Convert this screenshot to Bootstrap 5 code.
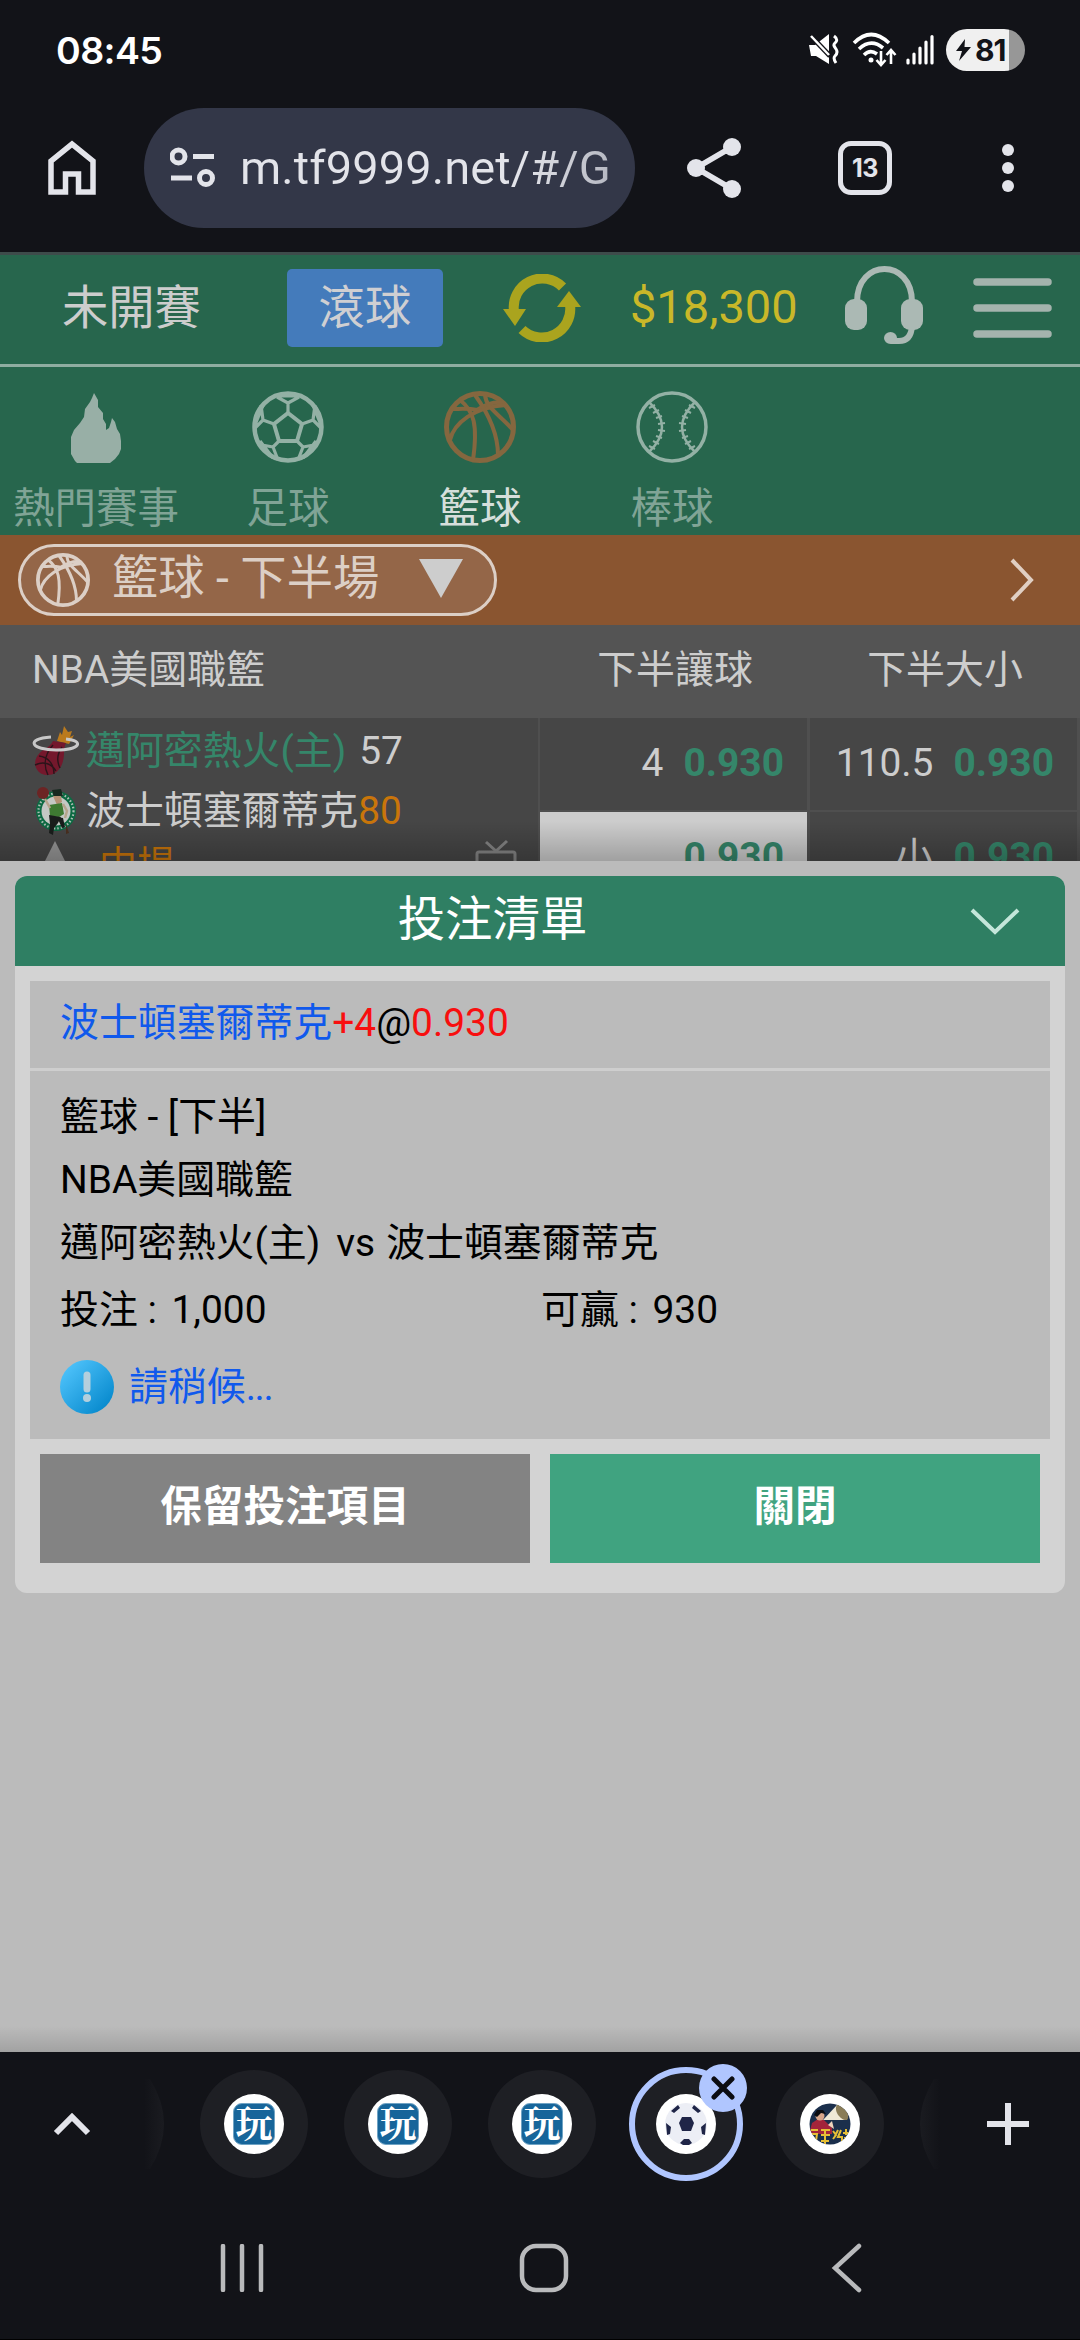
<!DOCTYPE html>
<html lang="zh-Hant">
<head>
<meta charset="utf-8">
<meta name="viewport" content="width=device-width, initial-scale=1">
<title>投注清單</title>
<link href="https://cdn.jsdelivr.net/npm/bootstrap@5.3.0/dist/css/bootstrap.min.css" rel="stylesheet">
<style>
  html, body { height: 100%; }
  body { font-family: Roboto, "Noto Sans CJK TC", sans-serif; background: #121318; color: #cdcdcd; overflow: hidden; }
  svg { display: block; flex: none; }
  .screen { width: 1080px; height: 2340px; overflow: hidden; }
  .screen > * { flex: none; }

  /* system status bar */
  .statusbar { height: 84px; padding: 16px 56px 0 56px; color: #fff; }
  .clock { font: 600 37.5px/50px Inter, sans-serif; letter-spacing: -.6px; padding-top: 1px; }
  .wifi { margin-left: 12px; }
  .battery { width: 79px; height: 42px; border-radius: 21px; background: linear-gradient(90deg, #f0f0f0 63px, #979797 63px); color: #121318; padding-left: 10px; margin: 0 -1px 0 12px; font: 700 30px/42px Inter, sans-serif; letter-spacing: -1px; }

  /* browser toolbar */
  .toolbar { height: 168px; padding: 0 48px; }
  .urlpill { width: 491px; height: 120px; border-radius: 60px; background: #333748; margin-left: 48px; padding-left: 26px; }
  .urltext { font: 400 47px/60px Roboto, sans-serif; letter-spacing: .1px; margin-left: 25px; width: 375px; white-space: nowrap; background: linear-gradient(90deg, #e3e4ea 75%, #b4b6c0); -webkit-background-clip: text; background-clip: text; color: transparent; }
  .tabcount { width: 54px; height: 54px; border: 5px solid #e3e4ea; border-radius: 13px; color: #e3e4ea; font: 700 25px/44px Inter, sans-serif; letter-spacing: -.5px; margin-left: 96px; }

  /* site header */
  .sitebar { height: 115px; background: #27664d; border-top: 3px solid #3e4c4b; border-bottom: 3px solid #8fada1; padding: 0 0 4px 62px; }
  .t46 { font-size: 46.3px; line-height: 60px; }
  .btn-live { width: 156px; height: 78px; background: #447bbb; border-radius: 5px; margin-left: 86px; color: #cfcfd2; }
  .money { color: #c9b829; font-size: 47px; line-height: 60px; margin-left: 49px; width: 168px; padding-bottom: 2px; }
  .sports { height: 168px; background: #27664d; padding-top: 24px; font-size: 41.5px; line-height: 50px; }
  .sports > div { width: 192px; color: #80a496; white-space: nowrap; }
  .sports > div.on { color: #d6dfdb; }
  .sports span { margin-top: 21px; }

  /* category bar */
  .catbar { height: 90px; background: #8a5530; padding: 0 46px 0 18px; }
  .catpill { width: 479px; height: 72px; border: 3px solid #dccfc6; border-radius: 36px; background: #946648; padding: 0 31px 0 15px; color: #dccfc6; }
  .catname { margin: 0 0 4px 22px; }

  /* odds table */
  .f39 { font-size: 38.9px; line-height: 56px; }
  .oddshead { height: 93px; background: #545454; padding-bottom: 3px; }
  .oddshead > div:first-child { width: 540px; padding-left: 32px; }
  .oddshead > div + div { width: 270px; text-align: center; }
  .oddsclip { height: 143px; background: #4f4f4f; overflow: hidden; position: relative; }
  .oddsclip::after { content: ""; position: absolute; left: 0; right: 0; bottom: 0; height: 40px; background: linear-gradient(rgba(0,0,0,0), rgba(0,0,0,.22)); }
  .teams { width: 538px; height: 143px; background: #464646; padding: 3px 0 0 32px; margin-right: 2px; }
  .teamline { height: 60px; }
  .teamline .nm { margin-left: 6px; white-space: nowrap; }
  .home-nm, .odd { color: #35866a; }
  .oddscol { width: 267px; margin-right: 3px; }
  .oddscell { height: 92px; margin-bottom: 2px; background: #464646; padding: 0 23px 2px 0; gap: 20px; }
  .oddscell.picked { background: #cdcdcd; }
  .late { color: #c9750a; }
  .clockline { align-items: flex-start; }
  .period { margin: -4px 0 0 33px; font-size: 38px; line-height: 56px; }

  /* bet slip */
  .sheet { height: 1191px; background: linear-gradient(#bbb 1165px, #a2a2a2); padding: 15px; }
  .slip { height: 717px; background: #d3d3d3; border-radius: 12px; overflow: hidden; }
  .sliphead { height: 90px; background: #2f7f63; color: #fff; padding-right: 45px; }
  .sliphead .ttl { font-size: 47.4px; line-height: 60px; width: 957px; text-align: center; padding-bottom: 2px; }
  .slipbox { margin: 15px 15px 0; height: 458px; background: #bbb; color: #000; }
  .pickline { height: 90px; border-bottom: 3px solid #cecece; padding: 0 30px 3px; }
  .sliplines { padding: 14px 30px 0; }
  .sliplines > div { height: 63px; line-height: 63px; }
  .blue { color: #1059ec; }
  .red { color: #f80f0f; }
  .dots { letter-spacing: -1.4px; }
  .slipbtns { padding: 15px 25px 0; gap: 20px; }
  .slipbtns .btn { height: 109px; border: 0; border-radius: 0; color: #fff; font-weight: 700; font-size: 41.6px; line-height: 60px; padding: 0 0 4px; width: 490px; }
  .btn-keep { background: #838383; }
  .btn-shut { background: #40a380; }

  /* tab strip */
  .tabstrip { height: 144px; padding: 0 51px; }
  .tabbubble { width: 108px; height: 108px; border-radius: 54px; background: #1e1f24; position: relative; flex: none; }
  .tabicon { width: 60px; height: 60px; border-radius: 30px; background: #fff; }
  .tabbubble.current { width: 114px; height: 114px; border-radius: 57px; border: 6px solid #b0c6ff; margin: 0 -3px; }
  .wan { width: 42px; height: 42px; border-radius: 9px; border: 1.5px solid #6fa3c4; background: #17659a; color: #fff; font: 700 37px/36px "Noto Serif CJK TC", "Noto Sans CJK TC", sans-serif; display: flex; justify-content: center; }
  .closex { position: absolute; left: 64px; top: -9px; width: 48px; height: 48px; border-radius: 24px; background: #b0c6ff; }
  .sysnav { height: 144px; border-bottom: 1px solid #000; padding: 0 217px 0 220px; }
</style>
</head>
<body>
<svg width="0" height="0" class="position-absolute">
  <defs>
    <symbol id="bball" viewBox="0 0 72 72">
      <g fill="none" stroke="currentColor" stroke-width="4">
        <circle cx="36" cy="36" r="33.5" stroke-width="5"/>
        <path d="M8 18C16 18 24 17 33 19C44 12 52 10 60 12"/>
        <path d="M6 49C10 32 30 16 62 14"/>
        <path d="M16 9C30 20 34 34 29 69"/>
        <path d="M31 4C44 22 54 42 54 64"/>
        <path d="M41 4C42 17 55 23 69 39"/>
      </g>
    </symbol>
  </defs>
</svg>

<div class="screen d-flex flex-column">
  <div class="statusbar d-flex align-items-center">
    <div class="clock me-auto">08:45</div>
    <svg width="32" height="32" viewBox="0 0 32 32" fill="none" stroke="#fff"><path d="M1 11h6l14-11v30L8 22H3z" fill="#fff" stroke="none"/><path d="M2 1l20 21" stroke="#121318" stroke-width="5"/><path d="M3 2l18 19" stroke-width="2.5"/><path d="M26 2c4 3 3 5 1 7s-1 3 1 6 1 5-1 7-1 4 1 7" stroke-width="3"/></svg>
    <svg class="wifi" width="46" height="36" viewBox="0 0 46 36" fill="none" stroke="#fff" stroke-width="3.600"><path d="M2 11Q19-6 37 11M7 17Q19 6 31 16M12 23Q18 17 25 22"/><circle cx="19" cy="28" r="2.500" fill="#fff" stroke="none"/><path d="M29 19v13M24.500 28l4.500 5 4.500-5M39 32V19M34.500 23l4.500-5 4.500 5" stroke-width="2.600"/></svg>
    <svg class="ms-2" width="28" height="32" viewBox="0 0 28 32" stroke="#fff" stroke-width="3.200" stroke-linecap="round"><path d="M2 26v3M8 20v9M14 14v15M20 8v21M26 2.500v26.500"/></svg>
    <div class="battery d-flex align-items-center"><svg class="me-1" width="15" height="22" viewBox="0 0 15 22"><path d="M9 0L0 12h6l-3 10L15 8H8.500z" fill="#121318"/></svg>81</div>
  </div>

  <div class="toolbar d-flex align-items-center">
    <svg width="48" height="56" viewBox="0 0 48 56" fill="none" stroke="#e3e4ea" stroke-width="5.500"><path d="M3 52V21L24 4l21 17v31H30.500V34h-13v18z"/></svg>
    <div class="urlpill d-flex align-items-center">
      <svg width="45" height="42" viewBox="0 0 45 42" fill="none" stroke="#e3e4ea" stroke-width="5"><circle cx="8.500" cy="9.500" r="6.500"/><circle cx="36" cy="31" r="6.500"/><path d="M23 9.500h21M1 31h21"/></svg>
      <div class="urltext">m.tf9999.net/#/G</div>
    </div>
    <svg style="margin-left:51px" width="56" height="62" viewBox="0 0 56 62" fill="#e3e4ea"><path d="M46 10L10 31l36 21" fill="none" stroke="#e3e4ea" stroke-width="5.500"/><circle cx="10" cy="31" r="9"/><circle cx="46" cy="10" r="9"/><circle cx="46" cy="52" r="9"/></svg>
    <div class="tabcount text-center">13</div>
    <svg class="ms-auto" style="margin-right:18px" width="12" height="50" viewBox="0 0 12 50" fill="#e3e4ea"><circle cx="6" cy="7" r="6"/><circle cx="6" cy="25" r="6"/><circle cx="6" cy="43" r="6"/></svg>
  </div>

  <div class="sitebar d-flex align-items-center">
    <div class="t46">未開賽</div>
    <div class="btn-live d-flex align-items-center justify-content-center t46">滾球</div>
    <svg style="margin-left:60px" width="78" height="68" viewBox="0 0 78 68" fill="none" stroke="#aaa41e" stroke-width="10"><path d="M59.500 13A28.500 28.500 0 0 0 11 37M19 55.500A28.500 28.500 0 0 0 67 31"/><path d="M0 35h23L12 52zM78 33H54l12-16z" fill="#aaa41e" stroke="none"/></svg>
    <div class="money">$18,300</div>
    <svg style="margin-left:47px;margin-bottom:8px" width="80" height="80" viewBox="0 0 80 80"><path d="M12 38C12-6 67-6 67 38M67 62Q66 77 54 77H46" fill="none" stroke="#abb9b4" stroke-width="6"/><g fill="#abb9b4"><rect x="0" y="35" width="22" height="31" rx="9"/><rect x="56" y="35" width="22" height="31" rx="9"/><ellipse cx="45.500" cy="74" rx="6.500" ry="6"/></g></svg>
    <svg style="margin-left:48px" width="79" height="60" viewBox="0 0 79 60" stroke="#a4b3ad" stroke-width="7.500" stroke-linecap="round"><path d="M4 4h71M4 30h71M4 56h71"/></svg>
  </div>
  <div class="sports d-flex">
    <div class="d-flex flex-column align-items-center"><svg width="52" height="72" viewBox="0 0 52 72" fill="#98afa6"><path d="M24 2l4 7v7l5 6v6l3 5v6l3-2 2-6 1-4 3 4 2 7 3 5 1 7v8l-2 5-4 5-5 4-4 4-3 2H15l-5-3-5-5-4-7V46l3-7 6-7 4-6 1-8 5-7 2-4z"/></svg><span>熱門賽事</span></div>
    <div class="d-flex flex-column align-items-center"><svg width="72" height="72" viewBox="0 0 72 72" fill="none" stroke="#93b1a5" stroke-width="4"><circle cx="36" cy="36" r="33.500" stroke-width="4.500"/><path d="M36 22L50 33L45 50H27L22 33Z"/><path d="M36 22V12L25 6M36 12L47 6M27 5h18M50 33l11-4 2-15M61 29l8 8M60 12l9 22M45 50l6 6-5 13M51 56l11-2M64 50L51 67M27 50l-6 6 5 13M21 56l-11-2M8 50L21 67M22 33l-11-4L9 14M11 29l-8 8M12 12L3 34" stroke-width="3.200"/></svg><span>足球</span></div>
    <div class="on d-flex flex-column align-items-center"><svg width="72" height="72" style="color:#85673f"><use href="#bball"/></svg><span>籃球</span></div>
    <div class="d-flex flex-column align-items-center"><svg width="72" height="72" viewBox="0 0 72 72" fill="none" stroke="#93b1a5"><circle cx="36" cy="36" r="34" stroke-width="3.500"/><path d="M13 11Q39 36 13 61M59 11Q33 36 59 61" stroke-width="2.500"/><path d="M13 17l6-3M17 22l6-3M20 27l6-2M22 33l7-1M22 39l7 1M20 45l6 2M17 50l6 3M13 55l6 3M59 17l-6-3M55 22l-6-3M52 27l-6-2M50 33l-7-1M50 39l-7 1M52 45l-6 2M55 50l-6 3M59 55l-6 3" stroke-width="2"/></svg><span>棒球</span></div>
  </div>

  <div class="catbar d-flex align-items-center justify-content-between">
    <div class="catpill d-flex align-items-center">
      <svg width="54" height="54"><use href="#bball"/></svg>
      <div class="catname t46 text-nowrap">籃球 - 下半場</div>
      <svg class="ms-auto" style="margin-bottom:3px" width="44" height="39" viewBox="0 0 44 39"><path d="M0 0h44L22 39z" fill="#cdcdcd"/></svg>
    </div>
    <svg width="25" height="44" viewBox="0 0 25 44"><path d="M3 2l19 20L3 42" fill="none" stroke="#e0cfc3" stroke-width="4"/></svg>
  </div>

  <div class="oddshead d-flex align-items-center f39"><div>NBA美國職籃</div><div>下半讓球</div><div>下半大小</div></div>
  <div class="oddsclip d-flex f39">
    <div class="teams">
      <div class="teamline d-flex align-items-center">
        <svg width="48" height="52" viewBox="0 0 48 52"><path d="M25 16l3-9 2 3 2-9 4 6 4-1-2 6 4-2-5 9z" fill="#ba7a1d"/><path d="M21 16l13 2c-3 6-1 11-3 18-2 9-9 15-17 14C4 49 0 38 6 30c4-6 12-7 15-14z" fill="#74182c"/><path d="M7 31c9 1 15 8 15 18M3 40c8-4 16-2 21 6M21 20c-8 9-10 20-5 30M30 22c-5 7-5 15-2 21" fill="none" stroke="#2b141a" stroke-width="1.400"/><path d="M34 14c19 2 14 11-10 11S-8 14 19 12" fill="none" stroke="#c8c8c8" stroke-width="3"/></svg>
        <div class="nm home-nm">邁阿密熱火(主)</div><div style="margin-left:13px">57</div>
      </div>
      <div class="teamline d-flex align-items-center">
        <svg width="48" height="50" viewBox="0 0 48 50"><circle cx="24" cy="25" r="20" fill="#0c6a42"/><circle cx="24" cy="25" r="17.500" fill="none" stroke="#aebdb5" stroke-width="2.200" stroke-dasharray="1.500 2"/><circle cx="24" cy="25" r="14.500" fill="#c4c8c4"/><circle cx="11" cy="7" r="6" fill="#6c2424"/><path d="M20 4l9-1 2 7-9 1z" fill="#16281f"/><path d="M21 10h8l1 6-5 3z" fill="#b39074"/><path d="M17 19l13-2 2 11-5 3-9-1z" fill="#3e7a32"/><path d="M13 13l5 9M31 18l4 7-2 7" stroke="#b5a48c" stroke-width="2.500" fill="none"/><path d="M17 29l12 2-3 6-4 5-1 7-4-2 1-9zM25 31l6 1 2 9-3 1z" fill="#191d1b"/><path d="M34 38l3 9-3 1z" fill="#4a3020"/></svg>
        <div class="nm">波士頓塞爾蒂克</div><div class="late">80</div>
      </div>
      <div class="teamline clockline d-flex">
        <svg style="margin-left:12px" width="22" height="46" viewBox="0 0 22 46"><path d="M11 0l11 22H0z" fill="#969696"/></svg>
        <div class="late period">中場</div>
        <svg style="margin:-2px 0 0 300px" width="42" height="42" viewBox="0 0 42 42" fill="none" stroke="#858585" stroke-width="3"><path d="M11 3l10 9L32 2"/><rect x="2" y="13" width="38" height="28" rx="2"/></svg>
      </div>
    </div>
    <div class="oddscol">
      <div class="oddscell d-flex align-items-center justify-content-end"><span>4</span><b class="odd">0.930</b></div>
      <div class="oddscell picked d-flex align-items-center justify-content-end"><b class="odd">0.930</b></div>
    </div>
    <div class="oddscol">
      <div class="oddscell d-flex align-items-center justify-content-end"><span>110.5</span><b class="odd">0.930</b></div>
      <div class="oddscell d-flex align-items-center justify-content-end"><span>小</span><b class="odd">0.930</b></div>
    </div>
  </div>

  <div class="sheet">
    <div class="slip">
      <div class="sliphead d-flex align-items-center">
        <div class="ttl">投注清單</div>
        <svg width="50" height="29" viewBox="0 0 50 29"><path d="M2 3l23 22L48 3" fill="none" stroke="#c4e6da" stroke-width="4"/></svg>
      </div>
      <div class="slipbox f39">
        <div class="pickline d-flex align-items-center"><span class="blue">波士頓塞爾蒂克</span><span class="red">+4</span>@<span class="red">0.930</span></div>
        <div class="sliplines">
          <div>籃球 - [下半]</div>
          <div>NBA美國職籃</div>
          <div>邁阿密熱火(主)<span style="margin:0 11px 0 16px">vs</span>波士頓塞爾蒂克</div>
          <div class="d-flex" style="padding-top:4px"><div style="width:481px">投注 : <span style="margin-left:5px">1,000</span></div><div>可贏 : <span style="margin-left:5px">930</span></div></div>
          <div class="d-flex align-items-center blue" style="margin-top:18px">
            <svg width="54" height="54" viewBox="0 0 54 54"><defs><linearGradient id="ig" x1="0" y1="0" x2="1" y2="1"><stop offset=".1" stop-color="#4fc3fb"/><stop offset=".9" stop-color="#0588cc"/></linearGradient></defs><circle cx="27" cy="27" r="27" fill="url(#ig)"/><path d="M27 15v14" stroke="#b4cfdd" stroke-width="7" stroke-linecap="round"/><circle cx="27" cy="38" r="4" fill="#b4cfdd"/></svg>
            <span style="margin-left:15px">請稍候<span class="dots">...</span></span>
          </div>
        </div>
      </div>
      <div class="slipbtns d-flex"><button class="btn btn-keep">保留投注項目</button><button class="btn btn-shut">關閉</button></div>
    </div>
  </div>

  <div class="tabstrip d-flex align-items-center">
    <svg width="42" height="28" viewBox="0 0 42 28"><path d="M5 23l16-16 16 16" fill="none" stroke="#e3e4ea" stroke-width="6"/></svg>
    <svg style="margin-left:51px" width="20" height="90" viewBox="0 0 20 90"><defs><linearGradient id="fl"><stop offset="0" stop-color="#1e1f24" stop-opacity="0"/><stop offset="1" stop-color="#1e1f24" stop-opacity=".7"/></linearGradient></defs><path d="M0 0h6Q34 45 6 90H0z" fill="url(#fl)"/></svg>
    <div class="d-flex align-items-center" style="margin-left:36px;gap:36px">
      <div class="tabbubble d-flex align-items-center justify-content-center"><div class="tabicon d-flex align-items-center justify-content-center"><div class="wan">玩</div></div></div>
      <div class="tabbubble d-flex align-items-center justify-content-center"><div class="tabicon d-flex align-items-center justify-content-center"><div class="wan">玩</div></div></div>
      <div class="tabbubble d-flex align-items-center justify-content-center"><div class="tabicon d-flex align-items-center justify-content-center"><div class="wan">玩</div></div></div>
      <div class="tabbubble current d-flex align-items-center justify-content-center">
        <div class="tabicon d-flex align-items-center justify-content-center"><svg width="42" height="42" viewBox="0 0 42 42"><circle cx="21" cy="21" r="21" fill="#eceef5"/><g fill="#1f2547"><path d="M17 14h9l3 6-3 8h-9l-3-8z"/><path d="M6 8l7-6 2 3-6 5zM36 8l-7-6-2 3 6 5zM1 20l5 4-1 7-3 1zM41 20l-5 4 1 7 3 1zM15 40l4-4h5l3 4-3 2h-6z"/></g></svg></div>
        <div class="closex d-flex align-items-center justify-content-center"><svg width="24" height="24" viewBox="0 0 24 24"><path d="M3 3l18 18M21 3L3 21" stroke="#0c0d12" stroke-width="5" stroke-linecap="round"/></svg></div>
      </div>
      <div class="tabbubble d-flex align-items-center justify-content-center"><div class="tabicon d-flex align-items-center justify-content-center"><svg width="42" height="42" viewBox="0 0 42 42"><clipPath id="mc"><circle cx="21" cy="21" r="20.500"/></clipPath><g clip-path="url(#mc)"><path d="M0 0h42v42H0z" fill="#1b2f4c"/><path d="M3 20l6-4 6 1 8 8v6H0z" fill="#a3243a"/><circle cx="11" cy="13" r="4.500" fill="#d8a68a"/><path d="M5 12l3-5 6 0 3 4-5-1-4 4z" fill="#0b0c10"/><path d="M14 17L28 2l9 15z" fill="#efe9d6"/><path d="M28 2c7-2 14 11 10 15-6 1-14-9-10-15z" fill="#8a7d58"/><path d="M19 22l4-4 2 8z" fill="#efd3bd"/><path d="M2 27h7M3 31h5l-1 7H2M12 27h9M16 27v5M12 32h9M16 32v9M12 38h8M24 28l3 4-3 4M29 27l-3 6M32 27l-3 7h4v6M37 26v6M34 30h8M35 35h7M37 35l-3 6" stroke="#e6bf35" stroke-width="2" fill="none"/></g></svg></div></div>
    </div>
    <svg style="margin-left:36px" width="20" height="90" viewBox="0 0 20 90"><defs><linearGradient id="fr"><stop offset="0" stop-color="#1e1f24" stop-opacity=".7"/><stop offset="1" stop-color="#1e1f24" stop-opacity="0"/></linearGradient></defs><path d="M20 0h-6Q-14 45 14 90h6z" fill="url(#fr)"/></svg>
    <svg class="ms-auto" width="42" height="42" viewBox="0 0 42 42"><path d="M21 0v42M0 21h42" stroke="#e3e4ea" stroke-width="6"/></svg>
  </div>
  <div class="sysnav d-flex align-items-center">
    <svg width="45" height="48" viewBox="0 0 45 48" stroke="#b9babc" stroke-width="4.500" stroke-linecap="round"><path d="M3 2v44M22 2v44M41 2v44"/></svg>
    <svg style="margin-left:254px" width="50" height="50" viewBox="0 0 50 50"><rect x="3" y="3" width="44" height="44" rx="14" fill="none" stroke="#b9babc" stroke-width="4.500"/></svg>
    <svg class="ms-auto" width="32" height="50" viewBox="0 0 32 50"><path d="M28 3L4 25l24 22" fill="none" stroke="#b9babc" stroke-width="4.500" stroke-linecap="round"/></svg>
  </div>
</div>
<script src="https://cdn.jsdelivr.net/npm/bootstrap@5.3.0/dist/js/bootstrap.bundle.min.js"></script>
</body>
</html>
